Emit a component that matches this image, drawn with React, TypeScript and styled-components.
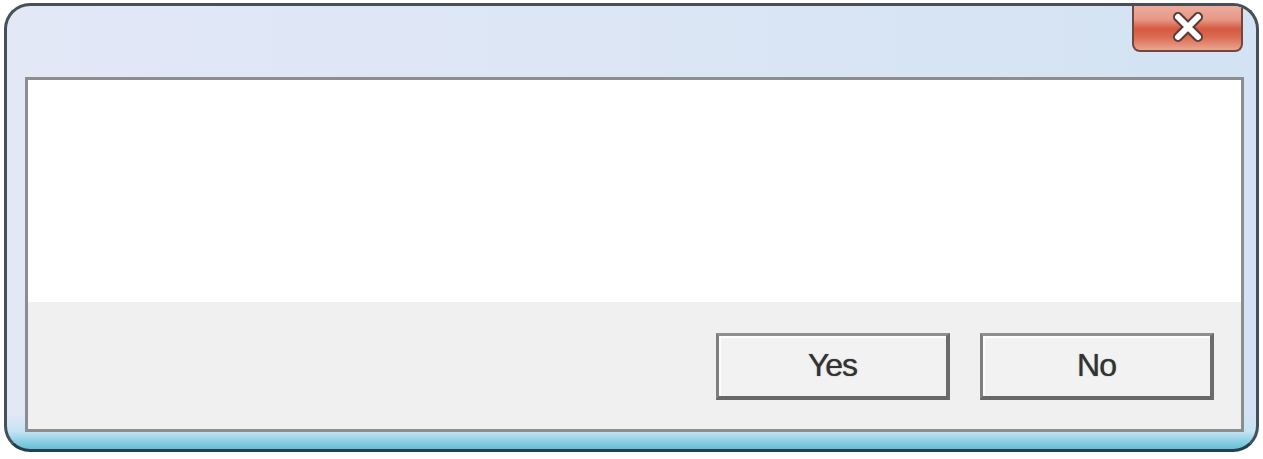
import styled, { createGlobalStyle } from "styled-components";

const GlobalStyle = createGlobalStyle`
  html, body {
    margin: 0;
    padding: 0;
    background: #ffffff;
  }
  * {
    box-sizing: border-box;
  }
`;

const Window = styled.div`
  margin: 3px 4px 0 4px;
  width: 1255px;
  height: 449px;
  border: 3px solid #474f57;
  border-bottom-color: #23404c;
  border-radius: 26px;
  padding: 0 12px 17px 18px;
  display: flex;
  flex-direction: column;
  font-family: "Liberation Sans", Arial, sans-serif;
  background:
    linear-gradient(to bottom, rgba(255, 255, 255, 0) 92%, #c6e3f4 96%, #62c0d6 100%),
    linear-gradient(to right, #e3e8f7 0%, #dde6f5 40%, #d3e3f3 100%);
  overflow: hidden;
`;

const TitleBar = styled.div`
  height: 71px;
  display: flex;
  justify-content: flex-end;
  align-items: flex-start;
`;

const CloseButton = styled.div`
  width: 111px;
  height: 49px;
  margin-top: -3px;
  margin-right: 1px;
  border: 2px solid #74463f;
  border-top: none;
  border-radius: 0 0 8px 8px;
  background: linear-gradient(
    to bottom,
    #eeb0a2 0%,
    #e69886 35%,
    #d65a42 55%,
    #da6a50 72%,
    #eaa690 100%
  );
  display: flex;
  align-items: center;
  justify-content: center;
  padding-top: 1px;
`;

const Client = styled.div`
  flex: 1;
  border: 3px solid #8b8d8f;
  display: flex;
  flex-direction: column;
  background: #ffffff;
`;

const Content = styled.div`
  height: 222px;
  background: #ffffff;
`;

const Footer = styled.div`
  flex: 1;
  background: #f0f0f0;
  display: flex;
  justify-content: flex-end;
  align-items: flex-start;
  gap: 30px;
  padding: 31px 27px 0 0;
`;

const DialogButton = styled.button`
  width: 234px;
  height: 67px;
  background: #f2f2f2;
  border-style: solid;
  border-width: 3px 4px 4px 3px;
  border-color: #8f8f8f #6b6b6b #686868 #7f7f7f;
  box-shadow: inset 2px 2px 0 #fdfdfd;
  font-family: "Liberation Sans", Arial, sans-serif;
  font-size: 32px;
  letter-spacing: -1px;
  color: #333333;
  text-shadow: 0 0 1px #555555;
  display: flex;
  align-items: center;
  justify-content: center;
  padding: 0 0 2px 0;
`;

function CloseGlyph() {
  return (
    <svg width="38" height="34" viewBox="0 0 38 34">
      <path
        d="M9 7 L29 27 M29 7 L9 27"
        stroke="#5c3a36"
        strokeWidth="10"
        strokeLinecap="round"
        fill="none"
      />
      <path
        d="M9 7 L29 27 M29 7 L9 27"
        stroke="#ffffff"
        strokeWidth="6"
        strokeLinecap="round"
        fill="none"
      />
    </svg>
  );
}

function App() {
  return (
    <>
      <GlobalStyle />
      <Window>
        <TitleBar>
          <CloseButton>
            <CloseGlyph />
          </CloseButton>
        </TitleBar>
        <Client>
          <Content />
          <Footer>
            <DialogButton>Yes</DialogButton>
            <DialogButton>No</DialogButton>
          </Footer>
        </Client>
      </Window>
    </>
  );
}

export default App;
